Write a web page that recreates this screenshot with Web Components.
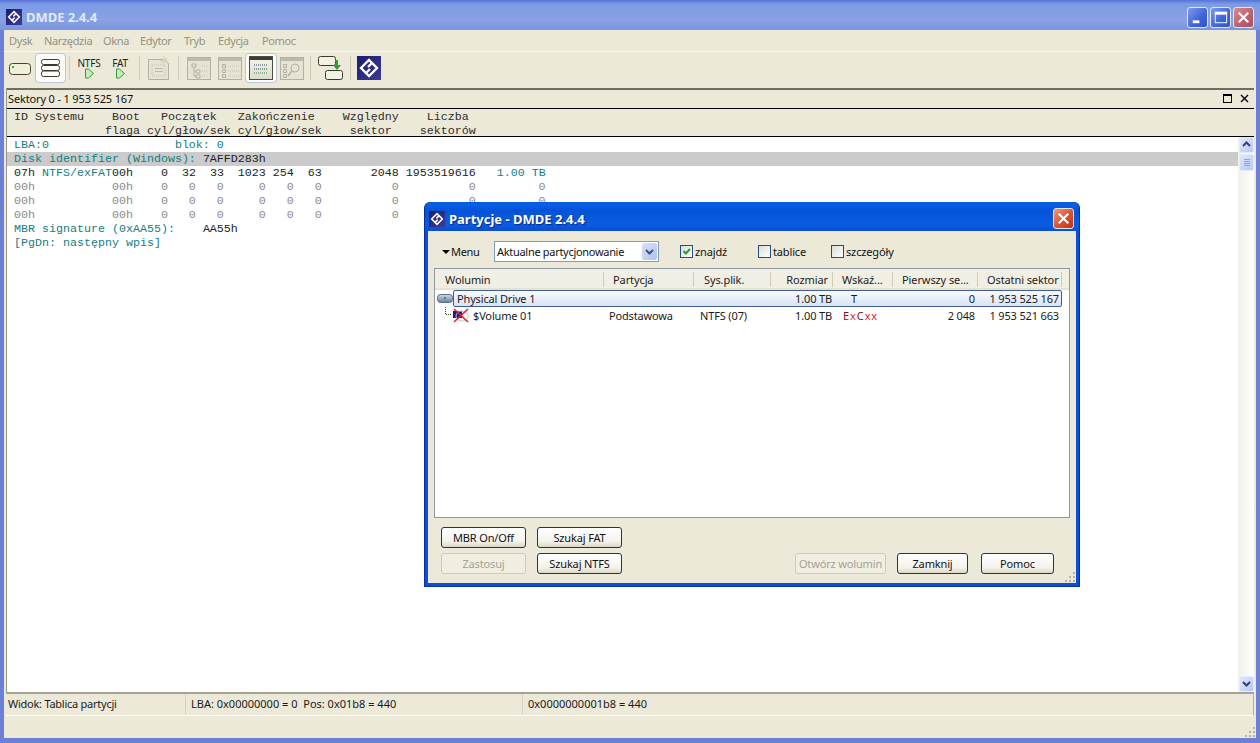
<!DOCTYPE html>
<html lang="pl">
<head>
<meta charset="utf-8">
<title>DMDE 2.4.4</title>
<style>
  html, body { margin: 0; padding: 0; background: #ece9d8; }
</style>
</head>
<body>
<x-window></x-window>
<script>
const UI_FONT = '"Noto Sans", "Liberation Sans", sans-serif'

class XLogo extends HTMLElement {
  constructor () {
    super()
    this.shadowDOM = this.attachShadow({ mode: 'open' })
    this.shadowDOM.innerHTML = `
      <style>
        :host { display: block; width: var(--logo-size, 16px); height: var(--logo-size, 16px); }
        svg { display: block; width: 100%; height: 100%; }
      </style>
      <svg viewBox="0 0 24 24">
        <defs>
          <linearGradient id="g" x1="0" y1="0" x2="1" y2="1">
            <stop offset="0" stop-color="#1c1c6c"/><stop offset="1" stop-color="#3c3c98"/>
          </linearGradient>
        </defs>
        <rect width="24" height="24" fill="url(#g)"/>
        <g fill="none" stroke="#fff" stroke-width="2.3">
          <path d="M14.5 6.5 12 4 4 12l5 5 4-4"/>
          <path d="M9.5 17.5 12 20l8-8-5-5-4 4"/>
        </g>
      </svg>
    `
  }
}

class XCaptionButton extends HTMLElement {
  constructor () {
    super()
    this.shadowDOM = this.attachShadow({ mode: 'open' })
  }

  connectedCallback () {
    const kind = this.getAttribute('kind')
    const glyphs = {
      min: '<rect x="5" y="13" width="7" height="3" fill="#fff"/>',
      max: '<rect x="4.5" y="4.5" width="12" height="11" fill="none" stroke="#fff"/><rect x="4" y="4" width="13" height="3" fill="#fff"/>',
      close: '<path d="M5 5l10 10M15 5L5 15" stroke="#fff" stroke-width="2.2" fill="none"/>'
    }
    const bg = {
      min: 'linear-gradient(135deg, #7b9df0, #3f62d8 60%, #3255cc)',
      max: 'linear-gradient(135deg, #7b9df0, #3f62d8 60%, #3255cc)',
      close: this.hasAttribute('active') ? 'linear-gradient(135deg, #ee9a7c, #d9512f 55%, #bd3413)' : 'linear-gradient(135deg, #d68c90, #b9626e 60%, #a84f60)'
    }
    this.shadowDOM.innerHTML = `
      <style>
        :host {
          display: block;
          width: 19px;
          height: 19px;
          border: 1px solid #dfe7fb;
          border-radius: 3px;
          box-sizing: content-box;
          background: ${bg[kind]};
        }
        svg { display: block; width: 19px; height: 19px; }
      </style>
      <svg viewBox="0 0 20 20">${glyphs[kind]}</svg>
    `
  }
}

class XToolbarButton extends HTMLElement {
  constructor () {
    super()
    this.shadowDOM = this.attachShadow({ mode: 'open' })
    this.shadowDOM.innerHTML = `
      <style>
        :host {
          display: flex;
          flex-direction: column;
          align-items: center;
          justify-content: center;
          width: var(--w, 30px);
          height: 30px;
          box-sizing: border-box;
          margin-top: 1px;
          font: 10px ${UI_FONT};
          color: #222;
        }
        :host([pressed]) {
          background: #fbfbf8;
          border: 1px solid #b9c6d6;
          border-radius: 4px;
        }
      </style>
      <slot></slot>
    `
  }
}

class XToolbarSeparator extends HTMLElement {
  constructor () {
    super()
    this.shadowDOM = this.attachShadow({ mode: 'open' })
    this.shadowDOM.innerHTML = `
      <style>
        :host {
          display: flex;
          justify-content: center;
          width: var(--w, 8px);
          padding: 3px 0 3px;
          box-sizing: border-box;
          height: 30px;
          margin-top: 1px;
        }
        div { width: 1px; background: #cfccbc; }
      </style>
      <div></div>
    `
  }
}

class XToolbar extends HTMLElement {
  constructor () {
    super()
    this.shadowDOM = this.attachShadow({ mode: 'open' })
    const play = `<svg width="12" height="11" viewBox="0 0 12 11" style="display:block;margin-top:-1px">
      <path d="M2.5 1h3l5 4.5-5 4.5h-3z" fill="#c9eac0" stroke="#2f9e35"/></svg>`
    const gray = '#b3b1a4'
    this.shadowDOM.innerHTML = `
      <style>
        :host {
          display: flex;
          height: 37px;
          padding-left: 2px;
          box-sizing: border-box;
          background: #ece9d8;
          border-top: 1px solid #f8f7f0;
          border-bottom: 1px solid #ece9d8;
        }
        svg { display: block; }
        .lbl { line-height: 12px; margin-top: -1px; letter-spacing: -0.2px; }
      </style>
      <x-toolbar-button style="--w:29px">
        <svg width="22" height="12" viewBox="0 0 22 12" style="margin:2px 2px 0 0"><rect x=".5" y=".5" width="21" height="11" rx="3" fill="#eef0d8" stroke="#4a4030"/><rect x="3" y="3" width="2" height="2" fill="#37b24a"/></svg>
      </x-toolbar-button>
      <x-toolbar-button style="--w:31px" pressed>
        <svg width="19" height="18" viewBox="0 0 19 18" fill="none" stroke="#3d382c"><rect x=".5" y=".5" width="18" height="5" rx="2"/><rect x=".5" y="6.5" width="18" height="5" rx="2"/><rect x=".5" y="12" width="18" height="5.5" rx="2"/></svg>
      </x-toolbar-button>
      <x-toolbar-separator style="--w:7px"></x-toolbar-separator>
      <x-toolbar-button style="--w:32px"><span class="lbl">NTFS</span>${play}</x-toolbar-button>
      <x-toolbar-button style="--w:30px"><span class="lbl">FAT</span>${play}</x-toolbar-button>
      <x-toolbar-separator></x-toolbar-separator>
      <x-toolbar-button style="--w:32px">
        <svg width="24" height="25" viewBox="0 0 24 25"><path d="M1.5 3.5h14l6 4v16h-20z" fill="#e6e3d4" stroke="${gray}"/><g fill="#bdbbae"><rect x="5" y="9" width="13" height="11" fill="none" stroke="#c4c2b4" stroke-dasharray="1 1"/><rect x="8" y="12" width="8" height="1"/><rect x="8" y="15" width="8" height="1"/></g><path d="M17 0v9M12.500 4.500h9M14 2l6 5M20 2l-6 5" stroke="#d3d0c0"/></svg>
      </x-toolbar-button>
      <x-toolbar-separator style="--w:7px"></x-toolbar-separator>
      <x-toolbar-button style="--w:33px">
        <svg width="24" height="23" viewBox="0 0 24 23"><rect x=".5" y=".5" width="23" height="22" fill="#e6e3d4" stroke="${gray}"/><rect x="1" y="1" width="22" height="3" fill="#bdbaac"/><path d="M5 7h4v3H5zM9 13h4v3H9zM9 18h4v3H9zM7 10v9h2M7 14h2" fill="none" stroke="${gray}"/><path d="M15 9h6M15 14h6M15 19h6" stroke="#c4c2b4" stroke-dasharray="1 1"/></svg>
      </x-toolbar-button>
      <x-toolbar-button style="--w:30px">
        <svg width="24" height="23" viewBox="0 0 24 23"><rect x=".5" y=".5" width="23" height="22" fill="#e6e3d4" stroke="${gray}"/><rect x="1" y="1" width="22" height="3" fill="#bdbaac"/><path d="M4.500 7.500h3v3h-3zM4.500 12.500h3v3h-3zM4.500 17.500h3v3h-3z" fill="none" stroke="${gray}"/><path d="M10 9h11M10 14h11M10 19h11" stroke="#c4c2b4" stroke-dasharray="1 1"/></svg>
      </x-toolbar-button>
      <x-toolbar-button style="--w:32px" pressed>
        <svg width="24" height="24" viewBox="0 0 24 24"><defs><linearGradient id="tb" x1="0" y1="0" x2="0" y2="1"><stop offset="0" stop-color="#f5f4ea"/><stop offset="1" stop-color="#dcdccb"/></linearGradient></defs><rect x=".5" y=".5" width="23" height="23" fill="url(#tb)" stroke="#4d4a3e"/><rect x="1" y="1" width="22" height="3" fill="#3e3c32"/><path d="M5 9h14M5 13h14" stroke="#2f4a6a" stroke-dasharray="1 1"/><path d="M5 17h14" stroke="#2f8a4a" stroke-dasharray="1 1"/></svg>
      </x-toolbar-button>
      <x-toolbar-button style="--w:29px">
        <svg width="24" height="23" viewBox="0 0 24 23"><rect x=".5" y=".5" width="23" height="22" fill="#e6e3d4" stroke="${gray}"/><rect x="1" y="1" width="22" height="3" fill="#bdbaac"/><path d="M3.500 7.500h3v3h-3zM3.500 12.500h3v3h-3zM3.500 17.500h3v3h-3z" fill="none" stroke="${gray}"/><circle cx="15" cy="11" r="4" fill="none" stroke="${gray}"/><path d="M12 14l-4 5" stroke="${gray}" stroke-width="1.600"/></svg>
      </x-toolbar-button>
      <x-toolbar-separator></x-toolbar-separator>
      <x-toolbar-button style="--w:32px">
        <svg width="25" height="24" viewBox="0 0 25 24"><rect x=".5" y=".5" width="17" height="9" rx="2" fill="#f3f1e2" stroke="#3d382c"/><rect x="7.500" y="14.500" width="17" height="9" rx="2" fill="#f3f1e2" stroke="#3d382c"/><path d="M17 5h2v5" fill="none" stroke="#2f9e35" stroke-width="2"/><path d="M15 9h8l-4 5z" fill="#2f9e35"/></svg>
      </x-toolbar-button>
      <x-toolbar-separator></x-toolbar-separator>
      <x-toolbar-button style="--w:29px"><x-logo style="--logo-size:24px"></x-logo></x-toolbar-button>
    `
  }
}

class XMenubar extends HTMLElement {
  constructor () {
    super()
    this.shadowDOM = this.attachShadow({ mode: 'open' })
    this.shadowDOM.innerHTML = `
      <style>
        :host {
          display: grid;
          grid-template-columns: 35px 59px 37px 44px 34px 44px auto;
          align-items: center;
          height: 21px;
          padding-left: 5px;
          padding-bottom: 1px;
          box-sizing: border-box;
          background: #ece9d8;
          font: 11px ${UI_FONT};
          letter-spacing: -0.35px;
          color: #94937f;
        }
      </style>
      <span>Dysk</span><span>Narzędzia</span><span>Okna</span><span>Edytor</span><span>Tryb</span><span>Edycja</span><span>Pomoc</span>
    `
  }
}

class XTitlebar extends HTMLElement {
  constructor () {
    super()
    this.shadowDOM = this.attachShadow({ mode: 'open' })
  }

  connectedCallback () {
    const active = this.hasAttribute('active')
    const buttons = active
      ? '<x-caption-button kind="close" active></x-caption-button>'
      : '<x-caption-button kind="min"></x-caption-button><x-caption-button kind="max"></x-caption-button><x-caption-button kind="close"></x-caption-button>'
    this.shadowDOM.innerHTML = `
      <style>
        :host {
          display: flex;
          align-items: center;
          height: ${active ? 29 : 30}px;
          box-sizing: border-box;
          padding: 4px ${active ? 5 : 6}px 0 ${active ? 4 : 6}px;
          font: bold 13px ${UI_FONT};
          color: ${active ? '#fff' : '#e2e8f8'};
          background: ${active
            ? 'linear-gradient(180deg, #0a58e0 0, #0a5fe6 3px, #0553d6 8px, #0a5ce2 22px, #0a4fd0 29px)'
            : 'linear-gradient(180deg, #5474d6 0, #7d9ae6 4px, #88a2e4 20px, #7b94dc 30px)'};
          ${active ? 'border-radius: 6px 6px 0 0;' : ''}
        }
        .name { margin-left: 4px; flex: 1; letter-spacing: ${active ? 0 : -0.05}px; white-space: nowrap; text-shadow: ${active ? '1px 1px 1px #0a2a88' : 'none'}; }
        .btns { display: flex; gap: 2px; }
      </style>
      <x-logo></x-logo>
      <span class="name"><slot></slot></span>
      <div class="btns">${buttons}</div>
    `
  }
}

class XHexView extends HTMLElement {
  constructor () {
    super()
    this.shadowDOM = this.attachShadow({ mode: 'open' })
    const t = s => `<span class="t">${s}</span>`
    const k = s => `<span class="k">${s}</span>`
    this.shadowDOM.innerHTML = `
      <style>
        :host {
          display: block;
          flex: 1;
          min-width: 0;
          padding-top: 1px;
          background: #fff;
          font: 11.67px "Liberation Mono", monospace;
          color: #8a8a8a;
          overflow: hidden;
        }
        .l { height: 14px; line-height: 14px; padding-left: 7px; white-space: pre; }
        .hi { background: #cbcbcb; }
        .t { color: #118080; }
        .k { color: #222; }
      </style>
      <div class="l">${t('LBA:0                  blok: 0')}</div>
      <div class="l hi">${t('Disk identifier (Windows):')} ${k('7AFFD283h')}</div>
      <div class="l">${k('07h')} ${t('NTFS/exFAT')}${k('00h    0  32  33  1023 254  63       2048 1953519616')}   ${t('1.00 TB')}</div>
      <div class="l">00h           00h    0   0   0     0   0   0          0          0         0</div>
      <div class="l">00h           00h    0   0   0     0   0   0          0          0         0</div>
      <div class="l">00h           00h    0   0   0     0   0   0          0</div>
      <div class="l">${t('MBR signature (0xAA55):')}    ${k('AA55h')}</div>
      <div class="l">${t('[PgDn: następny wpis]')}</div>
    `
  }
}

class XScrollbar extends HTMLElement {
  constructor () {
    super()
    this.shadowDOM = this.attachShadow({ mode: 'open' })
    const btn = d => `<div class="b"><svg width="15" height="15" viewBox="0 0 15 15"><path d="${d}" fill="none" stroke="#2f4468" stroke-width="2"/></svg></div>`
    this.shadowDOM.innerHTML = `
      <style>
        :host {
          display: flex;
          flex-direction: column;
          justify-content: space-between;
          width: 16px;
          background: linear-gradient(90deg, #f3f1ec, #fefefb);
        }
        .b, .thumb {
          width: 15px;
          margin-left: 1px;
          box-sizing: border-box;
          border: 1px solid #e4ecfb;
          border-radius: 2px;
          background: linear-gradient(135deg, #dfe8fd, #b6c8f5);
        }
        .b { height: 16px; }
        svg { display: block; margin: -1px 0 0 -1px; }
        .top { display: flex; flex-direction: column; gap: 1px; }
        .thumb { height: 17px; display: flex; flex-direction: column; align-items: center; justify-content: center; gap: 1px; }
        .thumb i { display: block; width: 6px; height: 1px; background: #8ea4d8; }
      </style>
      <div class="top">
        ${btn('M4 9l3.500-3.500L11 9')}
        <div class="thumb"><i></i><i></i><i></i><i></i></div>
      </div>
      ${btn('M4 6l3.500 3.500L11 6')}
    `
  }
}

class XSectorPanel extends HTMLElement {
  constructor () {
    super()
    this.shadowDOM = this.attachShadow({ mode: 'open' })
    this.shadowDOM.innerHTML = `
      <style>
        :host {
          display: flex;
          flex-direction: column;
          flex: 1;
          min-height: 0;
          margin: 0 2px 0 2px;
          background: #ece9d8;
          border-left: 1px solid #9a988a;
        }
        .head {
          display: flex;
          align-items: center;
          justify-content: space-between;
          height: 21px;
          box-sizing: border-box;
          border-top: 2px solid #6f6d60;
          border-bottom: 1px solid #000;
          padding: 0 5px 1px 1px;
          font: 11px ${UI_FONT};
          letter-spacing: -0.15px;
          color: #111;
        }
        .tools { display: flex; align-items: center; gap: 8px; }
        .cols {
          height: 28px;
          box-sizing: border-box;
          border-bottom: 1px solid #000;
          padding: 1px 0 0 7px;
          font: 11.67px "Liberation Mono", monospace;
          color: #2c2c2c;
          line-height: 14px;
          white-space: pre;
        }
        .body { display: flex; flex: 1; min-height: 0; }
        svg { display: block; }
      </style>
      <div class="head">
        <span>Sektory 0 - 1 953 525 167</span>
        <div class="tools">
          <svg width="9" height="9" viewBox="0 0 9 9"><rect x=".5" y=".5" width="8" height="8" fill="none" stroke="#000"/><rect x="0" y="0" width="9" height="2"/></svg>
          <svg width="9" height="9" viewBox="0 0 9 9"><path d="M1 1l7 7M8 1L1 8" stroke="#000" stroke-width="1.400"/></svg>
        </div>
      </div>
      <div class="cols">ID Systemu    Boot   Początek   Zakończenie    Względny    Liczba
             flaga cyl/głow/sek cyl/głow/sek    sektor    sektorów</div>
      <div class="body">
        <x-hex-view></x-hex-view>
        <x-scrollbar></x-scrollbar>
      </div>
    `
  }
}

class XStatusbar extends HTMLElement {
  constructor () {
    super()
    this.shadowDOM = this.attachShadow({ mode: 'open' })
    this.shadowDOM.innerHTML = `
      <style>
        :host {
          display: grid;
          grid-template-columns: 180px 337px 1fr;
          height: 24px;
          box-sizing: border-box;
          margin: 0 2px 0 2px;
          border-top: 2px solid #a5a394;
          border-bottom: 1px solid #fff;
          border-right: 1px solid #b3b1a2;
          background: #ece9d8;
          font: 11px/20px ${UI_FONT};
          color: #1a1a1a;
        }
        span { padding-left: 5px; border-right: 1px solid #d6d3c4; white-space: nowrap; }
        span:first-of-type { padding-left: 2px; letter-spacing: -0.25px; }
        span:last-child { border: 0; }
      </style>
      <span>Widok: Tablica partycji</span>
      <span>LBA: 0x00000000 = 0&nbsp; Pos: 0x01b8 = 440</span>
      <span>0x0000000001b8 = 440</span>
    `
  }
}

class XGrip extends HTMLElement {
  constructor () {
    super()
    this.shadowDOM = this.attachShadow({ mode: 'open' })
    this.shadowDOM.innerHTML = `
      <style>
        :host { display: block; width: 11px; height: 11px; }
        svg { display: block; }
      </style>
      <svg width="11" height="11" viewBox="0 0 11 11" fill="#b5b2a3">
        <rect x="8" y="0" width="2" height="2"/><rect x="4" y="4" width="2" height="2"/><rect x="8" y="4" width="2" height="2"/>
        <rect x="0" y="8" width="2" height="2"/><rect x="4" y="8" width="2" height="2"/><rect x="8" y="8" width="2" height="2"/>
      </svg>
    `
  }
}

class XButton extends HTMLElement {
  constructor () {
    super()
    this.shadowDOM = this.attachShadow({ mode: 'open' })
    this.shadowDOM.innerHTML = `
      <style>
        :host {
          display: flex;
          align-items: center;
          justify-content: center;
          height: 21px;
          box-sizing: border-box;
          border: 1px solid #0f3a6e;
          border-radius: 3px;
          background: linear-gradient(180deg, #ffffff, #f4f3ec 70%, #dcd8c8);
          font: 11px ${UI_FONT};
          letter-spacing: -0.15px;
          color: #111;
          white-space: nowrap;
        }
        :host([disabled]) {
          border-color: #cdcbbd;
          background: #f0eee1;
          color: #a5a395;
        }
      </style>
      <slot></slot>
    `
  }
}

class XCheck extends HTMLElement {
  constructor () {
    super()
    this.shadowDOM = this.attachShadow({ mode: 'open' })
    this.shadowDOM.innerHTML = `
      <style>
        :host {
          display: flex;
          align-items: center;
          gap: 2px;
          font: 11px ${UI_FONT};
          letter-spacing: -0.15px;
          color: #111;
        }
        .box {
          width: 13px;
          height: 13px;
          box-sizing: border-box;
          border: 1px solid #1c5180;
          background: linear-gradient(135deg, #dcdcd7, #fff);
        }
        svg { display: none; }
        :host([checked]) svg { display: block; }
      </style>
      <div class="box"><svg width="11" height="11" viewBox="0 0 11 11"><path d="M2.500 5l2.300 2.500L9 3" fill="none" stroke="#21a121" stroke-width="2"/></svg></div>
      <slot></slot>
    `
  }
}

class XCombo extends HTMLElement {
  constructor () {
    super()
    this.shadowDOM = this.attachShadow({ mode: 'open' })
    this.shadowDOM.innerHTML = `
      <style>
        :host {
          display: flex;
          align-items: center;
          justify-content: space-between;
          width: 165px;
          height: 21px;
          box-sizing: border-box;
          border: 1px solid #7f9db9;
          background: #fff;
          padding: 0 1px 0 2px;
          font: 11px ${UI_FONT};
          letter-spacing: -0.3px;
          color: #111;
          white-space: nowrap;
        }
        .arrow {
          width: 15px;
          height: 17px;
          border-radius: 2px;
          background: linear-gradient(135deg, #d6e0f8, #b0c2ee);
        }
        svg { display: block; }
      </style>
      <slot></slot>
      <div class="arrow"><svg width="15" height="17" viewBox="0 0 15 17"><path d="M4 7l3.500 3.500L11 7" fill="none" stroke="#3f5578" stroke-width="2"/></svg></div>
    `
  }
}

class XListHeader extends HTMLElement {
  constructor () {
    super()
    this.shadowDOM = this.attachShadow({ mode: 'open' })
    this.shadowDOM.innerHTML = `
      <style>
        :host {
          display: grid;
          grid-template-columns: var(--cols);
          height: 21px;
          box-sizing: border-box;
          background: #f1efe3;
          border-bottom: 2px solid #e4e1d2;
          font: 11px/21px ${UI_FONT};
          letter-spacing: -0.1px;
          color: #222;
        }
        span {
          display: block;
          padding: 0 7px 0 9px;
          white-space: nowrap;
          position: relative;
        }
        span::after {
          content: '';
          position: absolute;
          right: 0;
          top: 3px;
          bottom: 3px;
          width: 1px;
          background: #cfccbb;
        }
        .r { text-align: right; }
      </style>
      <span style="padding-left:10px">Wolumin</span>
      <span>Partycja</span>
      <span style="padding-left:10px">Sys.plik.</span>
      <span class="r" style="padding-right:5px">Rozmiar</span>
      <span>Wskaź...</span>
      <span>Pierwszy se...</span>
      <span class="r">Ostatni sektor</span>
    `
  }
}

class XListRow extends HTMLElement {
  constructor () {
    super()
    this.shadowDOM = this.attachShadow({ mode: 'open' })
    this.shadowDOM.innerHTML = `
      <style>
        :host {
          display: grid;
          grid-template-columns: var(--cols);
          height: 17px;
          position: relative;
          font: 11px/17px ${UI_FONT};
          letter-spacing: -0.15px;
          color: #1a1a1a;
          white-space: nowrap;
        }
        :host([selected])::before {
          content: '';
          position: absolute;
          left: 18px;
          top: 0;
          right: 7px;
          bottom: 0;
          border: 1px solid #3f5f8f;
          border-radius: 2px;
          background: linear-gradient(180deg, #f8faff, #d9e3f6);
        }
        ::slotted(*) { position: relative; }
      </style>
      <slot></slot>
    `
  }
}

class XPartitionList extends HTMLElement {
  constructor () {
    super()
    this.shadowDOM = this.attachShadow({ mode: 'open' })
    this.shadowDOM.innerHTML = `
      <style>
        :host {
          display: block;
          --cols: 169px 90px 77px 62px 60px 85px 84px;
          height: 250px;
          box-sizing: border-box;
          border: 1px solid #8d9aa5;
          background: #fff;
          overflow: hidden;
        }
        .r { text-align: right; }
        .name { display: flex; align-items: center; }
        .red { color: #e01a3c; }
        .dark { color: #8a1020; }
        svg { display: block; flex: none; }
      </style>
      <x-list-header></x-list-header>
      <x-list-row selected>
        <div class="name">
          <svg width="16" height="9" viewBox="0 0 16 9" style="margin-left:2px"><defs><linearGradient id="dr" x1="0" y1="0" x2="0" y2="1"><stop offset="0" stop-color="#cfd8ea"/><stop offset="1" stop-color="#6c7e9c"/></linearGradient></defs><rect x=".5" y=".5" width="15" height="8" rx="3" fill="url(#dr)" stroke="#5c6c88"/><rect x="7" y="3" width="2" height="2" fill="#2a9d4a"/></svg>
          <span style="margin-left:4px">Physical Drive 1</span>
        </div>
        <div style="padding-left:5px"></div>
        <div></div>
        <div class="r" style="padding-right:1px">1.00 TB</div>
        <div style="padding-left:18px">T</div>
        <div class="r" style="padding-right:3px">0</div>
        <div class="r" style="padding-right:3px">1 953 525 167</div>
      </x-list-row>
      <x-list-row>
        <div class="name">
          <svg width="35" height="17" viewBox="0 0 35 17" style="margin-left:3px"><path d="M7.500 0v7.500h6" fill="none" stroke="#444" stroke-dasharray="1 1"/><rect x="15" y="4" width="9" height="7" fill="#1a1a8c"/><ellipse cx="24" cy="9" rx="6" ry="5" fill="none" stroke="#c4c4c4"/><path d="M16 2l14 13M30 2L16 15" stroke="#e0202c" stroke-width="1.600"/></svg>
          <span>$Volume 01</span>
        </div>
        <div style="padding-left:5px">Podstawowa</div>
        <div style="padding-left:6px">NTFS (07)</div>
        <div class="r" style="padding-right:1px">1.00 TB</div>
        <div style="padding-left:10px;letter-spacing:.9px"><span class="dark">E</span><span class="red">x</span><span class="dark">C</span><span class="red">xx</span></div>
        <div class="r" style="padding-right:3px">2 048</div>
        <div class="r" style="padding-right:3px">1 953 521 663</div>
      </x-list-row>
    `
  }
}

class XPartitionDialog extends HTMLElement {
  constructor () {
    super()
    this.shadowDOM = this.attachShadow({ mode: 'open' })
    this.shadowDOM.innerHTML = `
      <style>
        :host {
          position: absolute;
          left: 424px;
          top: 202px;
          width: 656px;
          height: 385px;
          box-sizing: border-box;
          display: flex;
          flex-direction: column;
          background: #0a4fd6;
          border-radius: 6px 6px 0 0;
          border: 1px solid #06309a;
          border-top: 0;
        }
        .body {
          position: relative;
          flex: 1;
          margin: 0 3px 3px;
          padding: 10px 6px 0;
          background: #ece9d8;
          font: 11px ${UI_FONT};
          color: #111;
        }
        .controls {
          display: grid;
          grid-template-columns: 52px 186px 78px 73px auto;
          align-items: center;
          height: 21px;
          margin: 0 0 6px 8px;
        }
        .menu { display: flex; align-items: center; gap: 1px; letter-spacing: -0.3px; }
        .menu i { border: 4px solid transparent; border-top: 4px solid #000; border-bottom: 0; margin-left: 0; }
        .foot {
          display: flex;
          justify-content: space-between;
          align-items: flex-end;
          margin: 9px 16px 0 7px;
        }
        .left { display: grid; grid-template-columns: 85px 85px; gap: 5px 11px; }
        .right { display: flex; }
        x-grip { position: absolute; right: 0; bottom: 0; }
      </style>
      <x-titlebar active>Partycje - DMDE 2.4.4</x-titlebar>
      <div class="body">
        <div class="controls">
          <div class="menu"><i></i><span>Menu</span></div>
          <x-combo>Aktualne partycjonowanie</x-combo>
          <x-check checked>znajdź</x-check>
          <x-check>tablice</x-check>
          <x-check>szczegóły</x-check>
        </div>
        <x-partition-list></x-partition-list>
        <div class="foot">
          <div class="left">
            <x-button>MBR On/Off</x-button>
            <x-button>Szukaj FAT</x-button>
            <x-button disabled>Zastosuj</x-button>
            <x-button>Szukaj NTFS</x-button>
          </div>
          <div class="right">
            <x-button disabled style="width:91px;margin-right:11px">Otwórz wolumin</x-button>
            <x-button style="width:71px;margin-right:13px">Zamknij</x-button>
            <x-button style="width:73px">Pomoc</x-button>
          </div>
        </div>
        <x-grip></x-grip>
      </div>
    `
  }
}

class XWindow extends HTMLElement {
  constructor () {
    super()
    this.shadowDOM = this.attachShadow({ mode: 'open' })
    this.shadowDOM.innerHTML = `
      <style>
        :host {
          display: flex;
          flex-direction: column;
          position: relative;
          width: 1260px;
          height: 743px;
          box-sizing: border-box;
          overflow: hidden;
          background: #ece9d8;
          font-family: ${UI_FONT};
        }
        .frame {
          display: flex;
          flex-direction: column;
          flex: 1;
          min-height: 0;
          background: #ece9d8;
          border-left: 4px solid #6c80d6;
          border-right: 4px solid #6c80d6;
          border-bottom: 5px solid #6c80d6;
        }
        .strip { position: relative; height: 22px; background: #ece9d8; }
        x-grip { position: absolute; right: 0; bottom: 0; }
      </style>
      <x-titlebar>DMDE 2.4.4</x-titlebar>
      <div class="frame">
        <x-menubar></x-menubar>
        <x-toolbar></x-toolbar>
        <x-sector-panel></x-sector-panel>
        <x-statusbar></x-statusbar>
        <div class="strip"><x-grip></x-grip></div>
      </div>
      <x-partition-dialog></x-partition-dialog>
    `
  }
}

customElements.define('x-logo', XLogo)
customElements.define('x-caption-button', XCaptionButton)
customElements.define('x-toolbar-button', XToolbarButton)
customElements.define('x-toolbar-separator', XToolbarSeparator)
customElements.define('x-toolbar', XToolbar)
customElements.define('x-menubar', XMenubar)
customElements.define('x-titlebar', XTitlebar)
customElements.define('x-hex-view', XHexView)
customElements.define('x-scrollbar', XScrollbar)
customElements.define('x-sector-panel', XSectorPanel)
customElements.define('x-statusbar', XStatusbar)
customElements.define('x-grip', XGrip)
customElements.define('x-button', XButton)
customElements.define('x-check', XCheck)
customElements.define('x-combo', XCombo)
customElements.define('x-list-header', XListHeader)
customElements.define('x-list-row', XListRow)
customElements.define('x-partition-list', XPartitionList)
customElements.define('x-partition-dialog', XPartitionDialog)
customElements.define('x-window', XWindow)
</script>
</body>
</html>
